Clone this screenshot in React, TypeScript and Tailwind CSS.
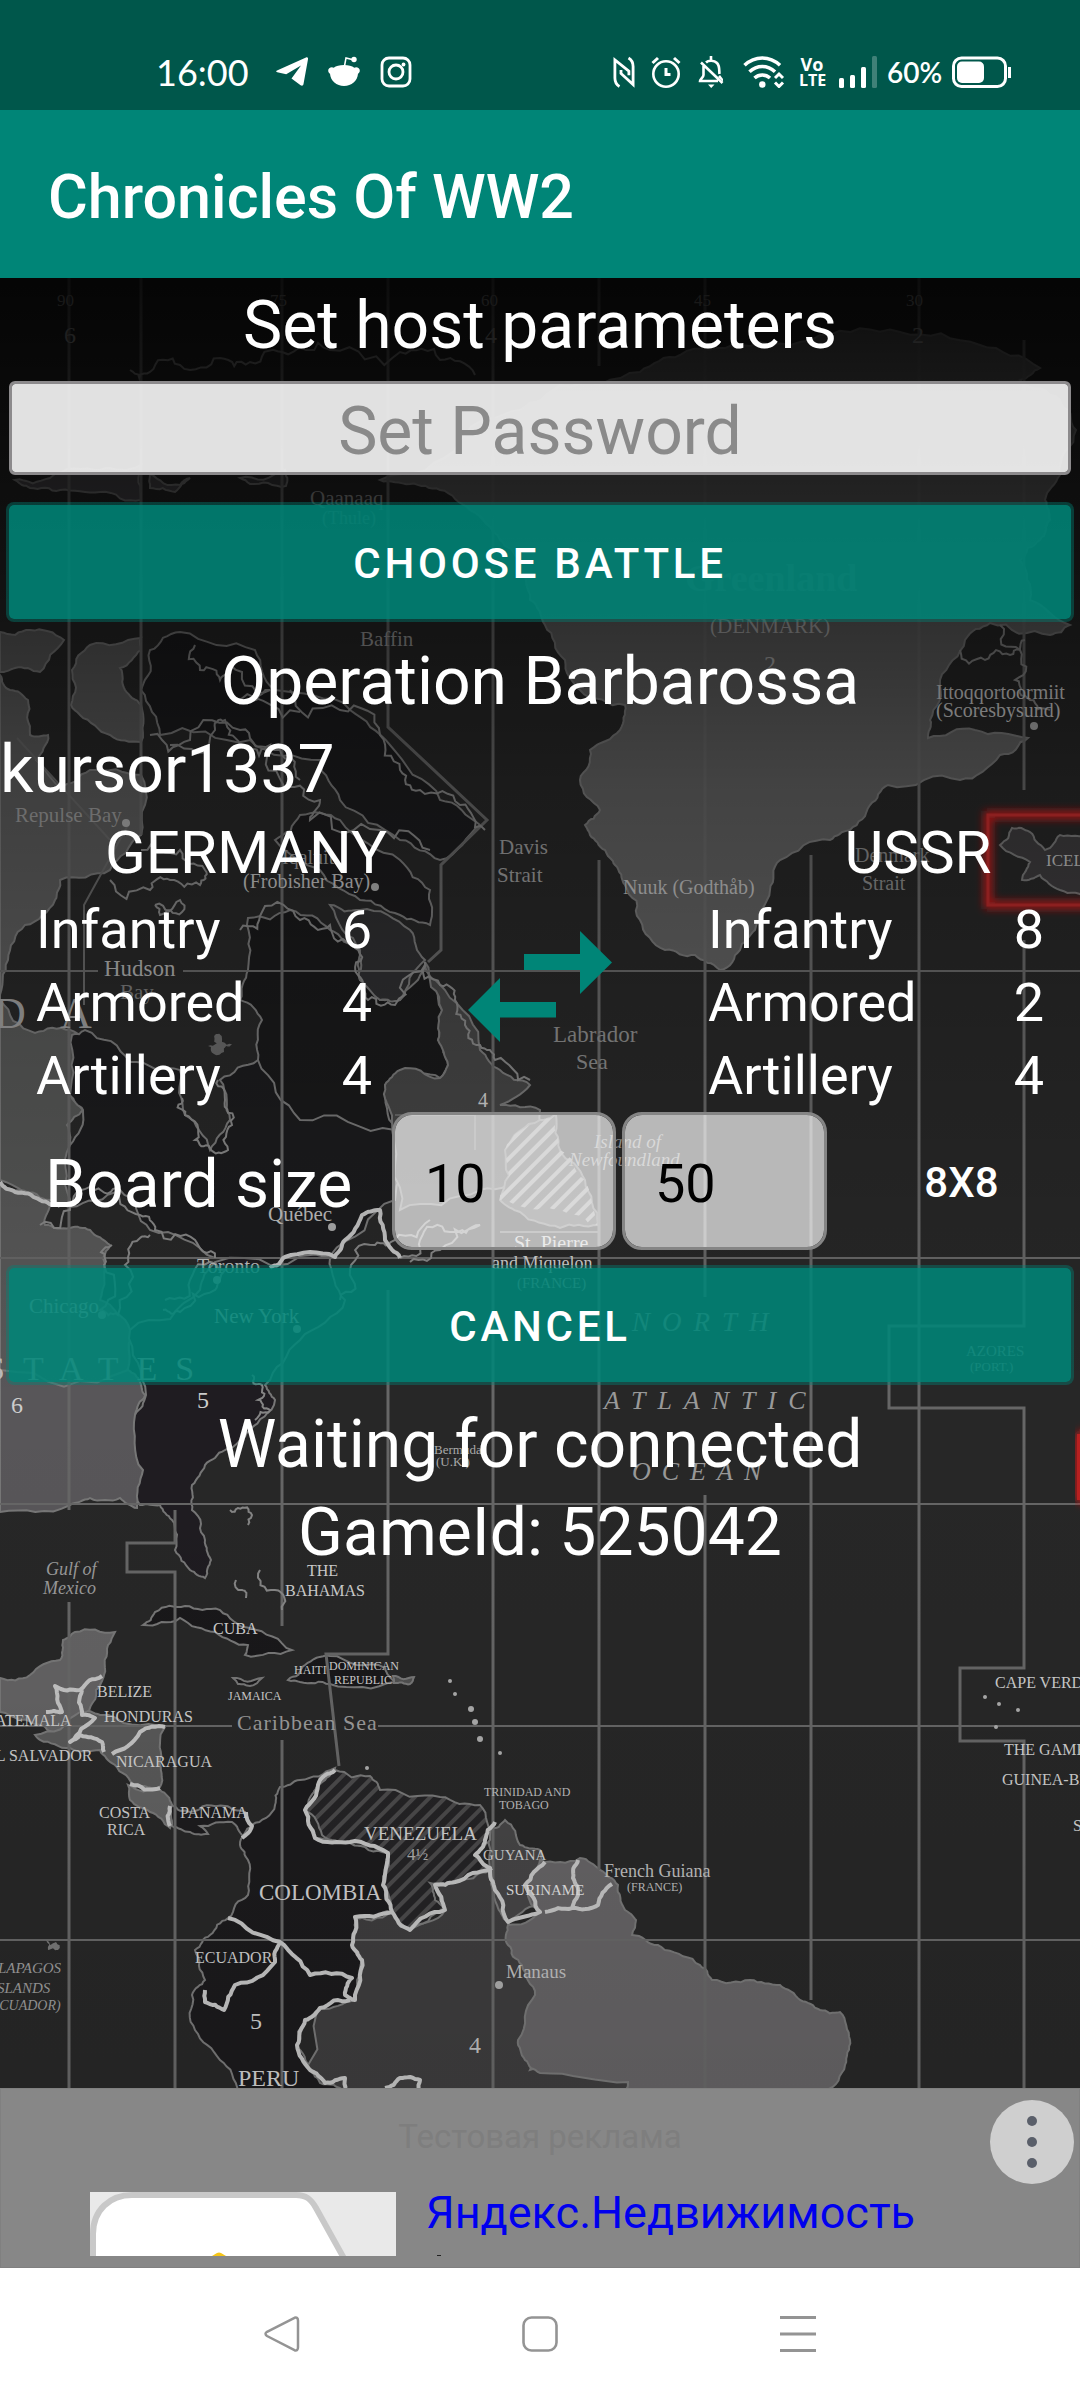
import React from "react";

type Pt = [number, number];

/* Turns a coarse outline into a ragged coast by displacing segment midpoints. */
function coast(points: string, closed = true, amp = 0.13): string {
  let pts: Pt[] = points.split(" ").map((p) => p.split(",").map(Number) as Pt);
  let seed = 7;
  const rnd = () => {
    seed = (seed * 16807) % 2147483647;
    return seed / 2147483647 - 0.5;
  };
  if (closed) pts.push(pts[0]);
  for (let k = 0; k < 3; k++) {
    const next: Pt[] = [pts[0]];
    for (let i = 1; i < pts.length; i++) {
      const [x1, y1] = pts[i - 1];
      const [x2, y2] = pts[i];
      const off = rnd() * amp * 2;
      const len = Math.hypot(x2 - x1, y2 - y1);
      const edge = (x1 <= 0 && x2 <= 0) || (y1 >= 2088 && y2 >= 2088) || len < 4;
      const d = edge ? 0 : off;
      next.push([(x1 + x2) / 2 + (y2 - y1) * d, (y1 + y2) / 2 - (x2 - x1) * d]);
      next.push([x2, y2]);
    }
    pts = next;
  }
  return "M" + pts.map(([x, y]) => `${x.toFixed(1)} ${y.toFixed(1)}`).join("L") + (closed ? "Z" : "");
}

const lands: { d: string; fill: string }[] = [
  // Arctic islands and northern Canada
  { d: "15,480 50,478 100,470 141,465 141,500 100,492 60,490 30,488", fill: "#4a484c" },
  { d: "150,474 180,485 190,478 175,492 150,488", fill: "#4a484c" },
  { d: "240,478 285,470 286,486 250,484", fill: "#3a3a3c" },
  { d: "0,632 30,630 64,640 40,672 15,668 0,672", fill: "#5a5a5a" },
  { d: "71,705 72,670 90,645 141,638 141,650 120,668 125,690 141,705 141,742 110,735 80,715", fill: "#5a5a5a" },
  { d: "0,675 10,690 28,700 30,735 48,735 36,760 60,790 90,770 141,775 141,835 110,870 60,880 55,900 25,925 8,960 0,1000", fill: "#5b5b5b" },
  { d: "0,1000 35,1033 70,1030 85,1035 72,1047 70,1095 83,1110 67,1125 70,1145 70,1207 50,1200 0,1180", fill: "#545554" },
  { d: "0,1184 20,1190 50,1205 45,1225 70,1228 90,1230 110,1245 103,1258 100,1300 130,1330 128,1383 0,1383", fill: "#585858" },
  { d: "72,1035 85,1030 130,1062 180,1070 185,1115 210,1150 230,1120 220,1080 258,1060 300,1100 390,1090 395,1200 330,1256 215,1258 150,1230 120,1190 70,1207 70,1145 83,1110 70,1095", fill: "#1b1b1d" },
  { d: "248,918 290,910 330,930 360,950 360,980 380,1000 400,1000 425,965 442,1010 438,1040 448,1065 440,1078 400,1070 385,1085 395,1130 300,1120 258,1060 262,1020 240,1000 248,970", fill: "#19191a" },
  { d: "425,962 445,990 480,1050 500,1070 530,1085 500,1105 540,1110 535,1170 480,1190 400,1210 392,1120 385,1085 400,1070 440,1078 448,1065 438,1040 442,1010", fill: "#444444" },
  { d: "275,840 300,815 340,820 400,860 430,890 430,925 400,915 360,900 320,870", fill: "#1b1a1c" },
  { d: "330,905 360,910 410,930 425,960 400,1000 380,1000 360,980 360,950", fill: "#2e2e30" },
  { d: "141,690 150,650 180,632 255,650 275,690 350,710 390,745 440,800 480,825 440,860 400,840 340,800 320,760 250,740 160,735", fill: "#1b1b1d" },
  // Greenland
  { d: "380,480 460,440 520,410 560,385 640,372 680,355 740,345 820,335 900,332 980,345 1040,368 1020,380 1060,400 1076,430 1060,475 1045,500 1050,520 1040,540 1020,560 1030,600 1070,625 1050,635 990,623 965,640 940,680 930,720 928,738 975,730 1028,738 1000,755 960,780 888,785 870,805 850,830 830,840 780,860 770,890 755,930 740,950 720,970 695,955 665,950 640,920 625,885 615,865 605,850 590,835 585,825 600,810 580,780 590,750 620,730 625,705 580,690 565,660 545,625 530,600 520,560 500,540 470,510 440,490 410,484", fill: "#606060" },
  // Iceland
  { d: "1000,845 1012,828 1030,832 1045,850 1060,835 1090,840 1090,898 1060,890 1040,875 1022,880 1030,862", fill: "#3d3b3d" },
  // Newfoundland
  { d: "500,1200 505,1150 540,1120 556,1115 560,1150 585,1180 598,1225 560,1228 520,1212", fill: "#4a4a4a" },
  // United States
  { d: "0,1370 128,1370 140,1382 145,1395 135,1415 140,1440 143,1470 137,1508 120,1498 90,1498 70,1505 0,1512", fill: "#585659" },
  { d: "130,1330 200,1290 215,1262 330,1258 345,1300 300,1340 265,1385 275,1400 250,1430 225,1450 205,1465 192,1485 192,1510 205,1540 211,1560 205,1578 190,1570 175,1550 172,1520 160,1505 140,1505 143,1470 135,1415 146,1395", fill: "#1f1c21" },
  // Central America
  { d: "0,1678 30,1675 60,1660 63,1640 75,1632 115,1632 108,1645 104,1675 96,1690 88,1712 60,1735 40,1725 0,1712", fill: "#636263" },
  { d: "35,1735 80,1712 100,1715 165,1727 160,1760 160,1787 135,1787 115,1765 100,1750 70,1748 40,1740", fill: "#585858" },
  { d: "128,1785 160,1790 172,1805 170,1828 150,1812 130,1800", fill: "#606060" },
  { d: "172,1805 190,1812 225,1806 245,1812 252,1828 244,1836 232,1822 200,1826 208,1834 190,1832 172,1826", fill: "#1c1b1d" },
  // Caribbean
  { d: "143,1625 155,1612 185,1606 220,1610 250,1628 292,1650 245,1655 248,1645 215,1632 180,1618", fill: "#19181a" },
  { d: "233,1678 262,1678 250,1686 238,1684", fill: "#19181a" },
  { d: "288,1680 305,1665 330,1656 385,1668 395,1682 330,1684 300,1682", fill: "#19181a" },
  { d: "393,1676 414,1677 410,1684 394,1683", fill: "#505050" },
  // South America
  { d: "350,1918 392,1912 410,1930 445,1910 435,1885 490,1870 508,1922 545,1990 530,2070 628,2082 628,2092 300,2092", fill: "#3d3c3d" },
  { d: "252,1825 275,1805 280,1787 300,1780 335,1768 318,1785 305,1810 315,1838 350,1842 388,1853 383,1880 392,1912 355,1918 352,1945 362,1960 355,2000 320,2008 305,2020 297,2045 310,2070 320,2083 345,2092 238,2092 220,2060 195,2030 192,1995 205,1980 195,1950 210,1935 228,1918 248,1895 248,1860 240,1845", fill: "#1b1a1c" },
  { d: "490,1830 505,1820 520,1845 540,1850 545,1865 525,1885 538,1905 508,1922 497,1905 492,1870", fill: "#454445" },
  { d: "508,1925 540,1912 525,1885 540,1860 580,1858 600,1870 618,1885 625,1910 636,1920 632,1935 658,1945 665,1950 700,1965 712,1980 750,1980 780,1985 800,2000 820,2010 840,2012 850,2040 845,2065 826,2092 625,2092 628,2082 540,2073 525,2060 518,2040 535,1995 522,1965 508,1945", fill: "#646264" },
];

const venezuela =
  "335,1770 370,1776 380,1790 440,1797 480,1805 490,1840 475,1855 490,1870 455,1882 430,1883 435,1900 445,1910 410,1930 392,1912 383,1885 388,1853 350,1843 322,1835 305,1810 318,1785";

const shores = [
  "150,735 190,740 240,730 270,745 285,790 320,800 310,820 380,830 430,850",
  "130,370 150,372 180,365 220,358 250,362 282,352 330,350 400,352 440,360 475,375",
  "195,645 200,670 220,680 230,665 270,690 240,700 300,712",
  "290,690 340,710 380,735 400,770 420,790 460,805 485,830",
  "170,745 215,730 225,720 240,745 280,750 300,780",
  "240,930 262,912 300,920 330,925 355,948 358,975 368,1000 395,1005 425,965",
  "425,962 440,985 455,1000 465,1025 480,1045 495,1060 530,1080",
  "110,880 150,890 170,880 200,885 205,870 180,850 141,850",
  "155,905 180,900 182,912 160,915 155,905",
  "182,1098 185,1115 195,1140 210,1148 228,1150 232,1125 225,1100 218,1080",
  "40,1225 70,1210 95,1190 120,1190 140,1215 155,1230 195,1240 215,1258",
  "112,1245 104,1265 100,1310 118,1315 125,1265 140,1238 150,1235",
  "165,1300 190,1280 225,1270 215,1290 180,1312 163,1310",
  "340,1300 350,1270 375,1245 395,1240 430,1220",
  "400,1258 420,1240 450,1232 480,1225 440,1250 410,1262",
  "252,1375 262,1385 258,1400 270,1410 255,1420",
  "230,1510 238,1508 252,1515 248,1525",
  "236,1580 242,1590 246,1598",
  "260,1570 275,1590 282,1610",
  "1000,625 1020,650 1015,680 1030,700 1050,710",
  "960,650 985,660 1010,655 1025,640",
];

const borders = [
  "0,1182 15,1192 40,1200 60,1206",
  "270,1268 285,1257 335,1257 345,1240 362,1215 380,1210 385,1240 400,1258",
  "102,1676 80,1690 55,1686 62,1712 46,1712",
  "82,1690 82,1715 95,1718 70,1742 80,1735 102,1742 104,1752",
  "165,1727 140,1732 112,1754",
  "130,1784 160,1788",
  "170,1806 170,1826",
  "246,1812 252,1826 242,1838",
  "335,1770 318,1785 305,1810 315,1838 350,1842 388,1853 383,1885 392,1912 355,1917 352,1945 362,1960 355,2000 345,1995 352,1978 310,1975 280,1942 228,1918",
  "280,1942 275,1962 235,1985 224,2010 205,2002 205,1990",
  "350,2000 320,2008 305,2020 297,2045 310,2070 325,2083 345,2078 345,2090",
  "385,2088 400,2078 420,2080 418,2090",
  "495,1822 485,1840 475,1855 490,1868 495,1890 508,1922 540,1912 525,1885 545,1862",
  "578,1860 573,1878 578,1895 572,1908 545,1912",
  "612,1884 598,1905 572,1908",
  "392,1912 410,1930 445,1910 435,1885 455,1882 492,1868",
];

const labels: [string, number, number, number, string][] = [
  ["90", 57, 306, 17, "#aaa"], ["75", 270, 306, 17, "#aaa"], ["60", 481, 306, 17, "#aaa"],
  ["45", 694, 306, 17, "#aaa"], ["30", 906, 306, 17, "#aaa"], ["6", 64, 343, 24, "#aaa"],
  ["4", 485, 343, 24, "#aaa"], ["2", 912, 343, 24, "#aaa"],
  ["Qaanaaq", 310, 505, 21, "#999"], ["(Thule)", 322, 524, 18, "#999"],
  ["(DENMARK)", 710, 633, 21, "#aaa"], ["Baffin", 360, 646, 21, "#999"],
  ["Ittoqqortoormiit", 936, 699, 20, "#ccc"], ["(Scoresbysund)", 936, 717, 20, "#ccc"],
  ["2", 764, 672, 24, "#aaa"], ["Repulse Bay", 15, 822, 21, "#999"],
  ["Iqaluit", 282, 864, 20, "#999"], ["(Frobisher Bay)", 243, 888, 20, "#bbb"],
  ["Davis", 499, 854, 21, "#999"], ["Strait", 497, 882, 21, "#999"],
  ["Nuuk (Godthåb)", 623, 894, 20, "#bbb"], ["Denmark", 855, 862, 20, "#888"],
  ["Strait", 862, 890, 20, "#888"], ["Hudson", 104, 976, 23, "#aaa"], ["Bay", 120, 999, 21, "#777"],
  ["Labrador", 553, 1042, 23, "#888"], ["Sea", 576, 1069, 22, "#888"],
  ["4", 478, 1107, 20, "#ccc"], ["Québec", 268, 1221, 21, "#bbb"],
  ["Toronto", 197, 1273, 20, "#bbb"], ["Chicago", 29, 1313, 21, "#ccc"],
  ["New York", 214, 1323, 21, "#ccc"], ["St. Pierre", 514, 1250, 20, "#ccc"],
  ["and Miquelon", 492, 1269, 18, "#ccc"], ["(FRANCE)", 517, 1288, 15, "#aaa"],
  ["AZORES", 966, 1356, 15, "#999"], ["(PORT.)", 970, 1371, 13, "#999"],
  ["6", 11, 1413, 24, "#ccc"], ["5", 197, 1408, 24, "#ccc"],
  ["Bermuda", 434, 1454, 13, "#aaa"], ["(U.K.)", 436, 1466, 13, "#aaa"],
  ["THE", 307, 1576, 16, "#ccc"], ["BAHAMAS", 285, 1596, 16, "#ccc"],
  ["CUBA", 213, 1634, 16, "#ccc"], ["HAITI", 294, 1674, 12, "#ccc"],
  ["DOMINICAN", 329, 1670, 12, "#ccc"], ["REPUBLIC", 334, 1684, 12, "#ccc"],
  ["JAMAICA", 228, 1700, 12, "#ccc"], ["BELIZE", 97, 1697, 16, "#ccc"],
  ["HONDURAS", 104, 1722, 16, "#ccc"], ["GUATEMALA", -28, 1726, 16, "#ccc"],
  ["EL SALVADOR", -14, 1761, 16, "#ccc"], ["NICARAGUA", 116, 1767, 16, "#ccc"],
  ["COSTA", 99, 1818, 16, "#ccc"], ["RICA", 107, 1835, 16, "#ccc"],
  ["PANAMA", 180, 1818, 16, "#ccc"], ["TRINIDAD AND", 484, 1796, 12, "#bbb"],
  ["TOBAGO", 499, 1809, 12, "#bbb"], ["VENEZUELA", 364, 1840, 19, "#ccc"],
  ["4½", 407, 1860, 17, "#aaa"], ["GUYANA", 483, 1860, 15, "#ccc"],
  ["SURINAME", 506, 1895, 15, "#ddd"], ["COLOMBIA", 259, 1900, 23, "#ccc"],
  ["French Guiana", 604, 1877, 18, "#bbb"], ["(FRANCE)", 627, 1891, 12, "#bbb"],
  ["ECUADOR", 195, 1963, 16, "#ccc"], ["Manaus", 506, 1978, 19, "#bbb"],
  ["5", 250, 2029, 24, "#ccc"], ["4", 469, 2053, 24, "#bbb"], ["PERU", 238, 2086, 24, "#ccc"],
  ["CAPE VERDE", 995, 1688, 16, "#ccc"], ["THE GAMBIA", 1004, 1755, 16, "#ccc"],
  ["GUINEA-BISSAU", 1002, 1785, 16, "#ccc"], ["S", 1073, 1831, 16, "#ccc"],
  ["ICELAND", 1046, 866, 17, "#bbb"],
];

const italics: [string, number, number, number][] = [
  ["Gulf of", 46, 1575, 18], ["Mexico", 43, 1594, 18], ["Island of", 594, 1148, 19],
  ["Newfoundland", 569, 1166, 19], ["GALAPAGOS", -22, 1973, 15], ["ISLANDS", -8, 1993, 15],
  ["(ECUADOR)", -14, 2010, 14],
];

function MapBackdrop() {
  return (
    <svg
      className="absolute inset-0 h-full w-full font-['Liberation_Serif',serif]"
      viewBox="0 278 1080 1810"
      preserveAspectRatio="xMidYMin slice"
      aria-hidden="true"
    >
      <defs>
        <linearGradient id="shade" x1="0" y1="0" x2="0" y2="1">
          <stop offset="0" stopColor="#000" stopOpacity="0.88" />
          <stop offset="0.1" stopColor="#000" stopOpacity="0.68" />
          <stop offset="0.19" stopColor="#000" stopOpacity="0.5" />
          <stop offset="0.28" stopColor="#000" stopOpacity="0.31" />
          <stop offset="0.42" stopColor="#000" stopOpacity="0.16" />
          <stop offset="0.62" stopColor="#000" stopOpacity="0" />
          <stop offset="1" stopColor="#000" stopOpacity="0.08" />
        </linearGradient>
        <pattern id="hatch" width="11" height="11" patternUnits="userSpaceOnUse" patternTransform="rotate(45)">
          <rect width="11" height="11" fill="#242325" />
          <rect width="4" height="11" fill="#4a494a" />
        </pattern>
        <pattern id="hatchLight" width="11" height="11" patternUnits="userSpaceOnUse" patternTransform="rotate(45)">
          <rect width="4" height="11" fill="#9a9a9a" />
        </pattern>
        <filter id="glow" x="-20%" y="-20%" width="140%" height="140%">
          <feGaussianBlur stdDeviation="4" />
        </filter>
      </defs>
      <rect y="278" width="1080" height="1810" fill="#272727" />
      {lands.map((l, i) => (
        <path key={i} d={coast(l.d)} fill={l.fill} stroke="#777" strokeWidth="2" />
      ))}
      <path d={coast(venezuela)} fill="url(#hatch)" stroke="#777" strokeWidth="2" />
      <path d={coast("500,1200 505,1150 540,1120 556,1115 560,1150 585,1180 598,1225 560,1210")} fill="url(#hatchLight)" />
      <g stroke="#666" strokeWidth="3" fill="none">
        <path d="M69 278V1510M69 1602V2088M141 278V835M175 1510V1543H127V1572H175V2088M282 278V1626M282 1740V2088M388 278V727L487 820L441 865V950L428 962M388 1290V1654H326L339 1766M493 278V2088M599 278V366M599 860V1870M705 278V1297M705 1495V2088M811 855V2000M919 278V2088M1024 340V790M1024 940V1326H889V1408H1024V1668H960V1741H1024V2088" />
        <path d="M0 971H98M183 971H1080M0 1258H1080M0 1504H1080M0 1726H232M378 1726H1080M0 1940H1080M395 1115H475V1150M500 1232H598" strokeWidth="2" />
        <path d="M128 825L84 905V1005M17 738L110 840" strokeWidth="2" />
      </g>
      <g fill="none" stroke="#858585" strokeWidth="2">
        {shores.map((s, i) => (
          <path key={i} d={coast(s, false, 0.35)} />
        ))}
      </g>
      <g fill="none" stroke="#c2c2c2" strokeWidth="4" strokeLinejoin="round">
        {borders.map((b, i) => (
          <path key={i} d={coast(b, false, 0.12)} />
        ))}
      </g>
      <g fill="#aaa">
        <circle cx="126" cy="823" r="4" />
        <circle cx="375" cy="887" r="4" />
        <circle cx="332" cy="1227" r="4" />
        <circle cx="217" cy="1280" r="4" />
        <circle cx="102" cy="1315" r="4" />
        <circle cx="297" cy="1329" r="4" />
        <circle cx="1034" cy="726" r="4" />
        <circle cx="499" cy="1985" r="4" />
        <circle cx="471" cy="1709" r="3" />
        <circle cx="475" cy="1722" r="3" />
        <circle cx="480" cy="1739" r="3" />
        <circle cx="455" cy="1694" r="2" />
        <circle cx="450" cy="1681" r="2" />
        <circle cx="500" cy="1753" r="2" />
        <circle cx="367" cy="1768" r="2" />
        <circle cx="985" cy="1697" r="2" />
        <circle cx="999" cy="1704" r="2" />
        <circle cx="1018" cy="1710" r="2" />
        <circle cx="996" cy="1727" r="2" />
        <path d={coast("208,1046 216,1034 222,1042 232,1044 224,1052 214,1054", true, 0.4)} fill="#666" />
        <path d={coast("46,1940 56,1942 58,1950 48,1950", true, 0.4)} fill="#777" />
      </g>
      {labels.map(([t, x, y, s, c], i) => (
        <text key={i} x={x} y={y} fontSize={s} fill={c}>{t}</text>
      ))}
      <g fontStyle="italic" fill="#999">
        {italics.map(([t, x, y, s]) => (
          <text key={t} x={x} y={y} fontSize={s}>{t}</text>
        ))}
      </g>
      <g fill="#999">
        <text x="-6" y="1028" fontSize="44">D</text>
        <text x="60" y="1028" fontSize="44">A</text>
        <text x="685" y="591" fontSize="38" fontWeight="bold" fill="#999">Greenland</text>
        <text x="-14" y="1380" fontSize="34" fill="#bbb" className="tracking-[18px]">STATES</text>
        <text x="237" y="1730" fontSize="22" className="tracking-[1px]">Caribbean Sea</text>
        <g fontStyle="italic">
          <text x="632" y="1331" fontSize="27" className="tracking-[12px]">NORTH</text>
          <text x="604" y="1409" fontSize="26" className="tracking-[12px]">ATLANTIC</text>
          <text x="632" y="1480" fontSize="26" className="tracking-[11px]">OCEAN</text>
        </g>
      </g>
      <rect y="278" width="1080" height="1810" fill="url(#shade)" />
      <rect x="988" y="815" width="120" height="90" fill="none" stroke="#a01212" strokeWidth="8" filter="url(#glow)" />
      <rect x="988" y="815" width="120" height="90" fill="none" stroke="#8c2020" strokeWidth="3" />
      <rect x="1079" y="1434" width="20" height="66" rx="6" fill="none" stroke="#d01818" strokeWidth="8" filter="url(#glow)" />
      <path d="M1079 1434v66" stroke="#b82020" strokeWidth="4" />
    </svg>
  );
}

function StatusBar() {
  return (
    <header className="flex h-[110px] items-center justify-between bg-[#00574b] pt-[34px] pr-[68px] pl-[156px] font-[Lato,sans-serif] text-white">
      <div className="flex items-center">
        <span className="w-[120px] text-[36px] leading-[38px]">16:00</span>
        <svg className="h-8 w-8" viewBox="0 0 32 32" fill="currentColor" aria-label="Telegram">
          <path d="M1 14.4 30 1.5c1.4-.6 2.3.2 2 1.700L27.500 28c-.3 1.700-1.500 2.100-2.900 1.200L15.500 22.600 25 9.500 10.200 18.200 1.300 16.200C-.3 15.700-.2 15 1 14.400Z" />
        </svg>
        <svg className="ml-5 h-8 w-8" viewBox="0 0 32 32" fill="currentColor" aria-label="Reddit">
          <path d="M16 9c4.500 0 8 1 10.300 2.800 2-1.500 5.700 0 5.500 3-.1 1.500-.8 2.400-1.800 3C29.500 25 23.500 30 16 30S2.500 25 2 17.800C1 17.200.3 16.300.2 14.800c-.2-3 3.500-4.500 5.500-3C8 10 11.500 9 16 9Z" />
          <path d="M16.500 10 18 2l8 2" fill="none" stroke="currentColor" strokeWidth="1.500" />
          <circle cx="26" cy="3.500" r="2.700" />
        </svg>
        <svg className="ml-5 h-8 w-8" viewBox="0 0 32 32" fill="none" stroke="currentColor" strokeWidth="2.800" aria-label="Instagram">
          <rect x="2" y="2" width="28" height="28" rx="7" />
          <circle cx="16" cy="16" r="7" />
          <circle cx="23.500" cy="8.500" r="1.900" fill="currentColor" stroke="none" />
        </svg>
      </div>
      <div className="flex items-center">
        <svg className="h-8 w-[22px]" viewBox="0 0 22 32" fill="none" stroke="currentColor" strokeWidth="2.800" aria-label="NFC">
          <path d="M6.500 30.500C3 28.500 1.900 26 1.900 22V4l14 11.200v4" />
          <path d="M15.500 2C19 4 20.100 6.500 20.100 10.500V28.500L8 17.500v-3.500" />
        </svg>
        <svg className="ml-4 h-8 w-[30px]" viewBox="0 0 30 32" fill="none" stroke="currentColor" strokeWidth="2.600" aria-label="Alarm">
          <circle cx="15" cy="18" r="12.700" />
          <path d="M15 12v6.500h4.500M1.500 7 7 2M28.500 7 23 2" strokeWidth="3" />
        </svg>
        <svg className="ml-4 h-8 w-[28px]" viewBox="0 0 28 32" fill="none" stroke="currentColor" strokeWidth="2.600" aria-label="Silent">
          <path d="M6.500 10v9c0 2.500-3.500 4-3.500 6h18M9 6.500C11 4.500 17 3.800 20 7c3 3 2 8 2.500 11M14 0v4M4 6.500 25.500 27" />
          <path d="M11 28.500h6.500L14.200 32ZM23 19l3 4v2.500L21 21Z" fill="currentColor" stroke="none" />
        </svg>
        <svg className="ml-[18px] h-8 w-[42px]" viewBox="0 0 42 32" fill="none" stroke="currentColor" strokeWidth="3.600" aria-label="Wi-Fi">
          <path d="M1.500 9.200C12-.5 26.500-.5 37 9.200M6.500 15.700c7.500-7 18-7 25.500 0M11.500 22c4.500-4 11-4 15.500 0" />
          <circle cx="19.300" cy="28.500" r="3.200" fill="currentColor" stroke="none" />
          <path d="m32 22 4-4 4 4M32 26.500l4 4 4-4" strokeWidth="3" />
        </svg>
        <span className="ml-[14px] flex w-[26px] flex-col text-center font-['Open_Sans',sans-serif] text-[16px] leading-4 font-bold">
          <span className="text-[18px]">Vo</span>
          <span>LTE</span>
        </span>
        <svg className="ml-[14px] h-8 w-[38px]" viewBox="0 0 38 32" fill="currentColor" aria-label="Signal">
          <rect x="0" y="22" width="5" height="10" rx="1.500" />
          <rect x="11" y="19" width="5" height="13" rx="1.500" />
          <rect x="22" y="11" width="5" height="21" rx="1.500" />
          <rect x="33" y="0" width="5" height="32" rx="1.500" opacity="0.25" />
        </svg>
        <span className="ml-[10px] w-[56px] text-[28px] leading-8 font-semibold">60%</span>
        <svg className="ml-[9px] h-8 w-[60px]" viewBox="0 0 60 32" fill="none" stroke="currentColor" strokeWidth="3" aria-label="Battery">
          <rect x="1.500" y="2" width="52" height="28.500" rx="8" />
          <rect x="5" y="5.500" width="27" height="21.500" rx="5" fill="currentColor" stroke="none" />
          <path d="M57.500 11v11" />
        </svg>
      </div>
    </header>
  );
}

function Army({ name, units }: { name: string; units: [string, number][] }) {
  return (
    <table className="w-[336px] text-[54px] leading-[73px]">
      <caption className="text-[60px] leading-[80px]">
        <span className="ml-[84px] flex w-[252px] justify-center whitespace-nowrap">{name}</span>
      </caption>
      <tbody>
        {units.map(([unit, count]) => (
          <tr key={unit}>
            <th scope="row" className="p-0 text-left font-normal">{unit}</th>
            <td className="p-0 text-right">{count}</td>
          </tr>
        ))}
      </tbody>
    </table>
  );
}

function WideButton({ children }: { children: React.ReactNode }) {
  return (
    <button
      type="button"
      className="mx-1.5 block h-[120px] rounded-lg border-[3px] border-[#008577]/40 bg-[#008577]/88 bg-clip-padding pt-1 text-[42px] leading-[48px] font-medium tracking-[0.09em] uppercase"
    >
      {children}
    </button>
  );
}

export default function App() {
  return (
    <div className="flex min-h-screen flex-col bg-white font-[Roboto,sans-serif] text-white">
      <StatusBar />
      <div className="flex h-[168px] items-center bg-[#008577] px-12 pt-1.5">
        <h1 className="text-[61px] leading-[70px] font-medium">Chronicles Of WW2</h1>
      </div>

      <main className="relative flex grow flex-col overflow-hidden pt-1 text-[66px] leading-[88px]">
        <MapBackdrop />
        <div className="relative flex flex-col">
          <h2 className="text-center">Set host parameters</h2>
          <input
            type="text"
            aria-label="Set Password"
            placeholder="Set Password"
            className="mx-[9px] mt-[11px] mb-[27px] h-[94px] rounded-md border-[3px] border-[#8c8a8c] bg-white/88 bg-clip-padding pt-1.5 text-center text-black placeholder:text-[#8a8a8a]"
          />
          <WideButton>Choose battle</WideButton>
          <p className="mt-4 text-center">Operation Barbarossa</p>
          <p>kursor1337</p>

          <section className="-mt-px flex items-center justify-between px-9">
            <Army name="GERMANY" units={[["Infantry", 6], ["Armored", 4], ["Artillery", 4]]} />
            <button type="button" aria-label="Swap sides" className="pt-12">
              <svg className="h-[111px] w-[144px]" viewBox="0 0 144 111" fill="#008577">
                <path d="M56 23h56V0l32 31.500L112 63V39H56ZM88 71H32V47L0 79l32 32V86.500h56Z" />
              </svg>
            </button>
            <Army name="USSR" units={[["Infantry", 8], ["Armored", 2], ["Artillery", 4]]} />
          </section>

          <div className="mb-[15px] flex h-[138px] items-stretch">
            <label htmlFor="board-width" className="flex w-[392px] items-center pt-2 pl-[45px]">
              Board size
            </label>
            <input
              id="board-width"
              type="text"
              defaultValue="10"
              className="w-[224px] rounded-[20px] border-[3px] border-[#858585] bg-white/68 bg-clip-padding px-[30px] pt-1 text-[54px] leading-[73px] text-black"
            />
            <input
              type="text"
              aria-label="Board height"
              defaultValue="50"
              className="ml-1.5 w-[205px] rounded-[20px] border-[3px] border-[#858585] bg-white/68 bg-clip-padding px-[30px] pt-1 text-[54px] leading-[73px] text-black"
            />
            <button type="button" className="flex-1 pt-1 pl-4 text-[42px] leading-[48px] font-medium">
              8X8
            </button>
          </div>

          <WideButton>Cancel</WideButton>
          <div className="mt-4 text-center">
            <p>Waiting for connected</p>
            <p>GameId: 525042</p>
          </div>
        </div>
      </main>

      <aside className="relative h-[180px] border border-[#808080] bg-[#878787] pt-6">
        <p className="text-center text-[33px] leading-[48px] text-[#7e7e7e]">Тестовая реклама</p>
        <div className="mt-[31px] flex h-16 overflow-hidden pl-[89px]">
          <svg className="h-16 w-[306px] shrink-0" viewBox="0 0 306 64" aria-hidden="true">
            <rect width="306" height="64" fill="#e9e9e9" />
            <path d="M3 70V42C3 18 20 3 42 3H206c10 0 15 4 20 13l30 54Z" fill="#fff" stroke="#c8c8c8" strokeWidth="6" />
            <path d="M122 64l5-3q2-1 4 0l5 3Z" fill="#f5c518" />
          </svg>
          <div className="ml-[30px] flex flex-col justify-between">
            <a href="#ad" className="text-[45px] leading-[42px] text-[#0000ee]">Яндекс.Недвижимость</a>
            <span className="ml-[11px] h-px w-1 bg-[#222]" />
          </div>
        </div>
        <button
          type="button"
          aria-label="Ad options"
          className="absolute top-[11px] right-[5px] flex h-[84px] w-[84px] flex-col items-center justify-center gap-[11px] rounded-full bg-[#cfcfcf]"
        >
          <span className="h-2.5 w-2.5 rounded-full bg-[#5a5f6a]" />
          <span className="h-2.5 w-2.5 rounded-full bg-[#5a5f6a]" />
          <span className="h-2.5 w-2.5 rounded-full bg-[#5a5f6a]" />
        </button>
      </aside>

      <nav className="flex h-[132px] items-center justify-center gap-[222px] text-[#949494]">
        <button type="button" aria-label="Back">
          <svg className="h-9 w-9" viewBox="0 0 36 36" fill="none" stroke="currentColor" strokeWidth="2.500" strokeLinejoin="round">
            <path d="M30.500 1.800 3 15.800q-3 2 0 4.200L30.500 34.200q3.500 1 3.500-3V4.800q0-4-3.500-3Z" />
          </svg>
        </button>
        <button type="button" aria-label="Home">
          <svg className="h-9 w-9" viewBox="0 0 36 36" fill="none" stroke="currentColor" strokeWidth="2.600">
            <rect x="1.500" y="1.500" width="33" height="33" rx="8" />
          </svg>
        </button>
        <button type="button" aria-label="Recent apps">
          <svg className="h-9 w-9" viewBox="0 0 36 36" stroke="currentColor" strokeWidth="3">
            <path d="M0 1.500h36M0 18h36M0 34.500h36" />
          </svg>
        </button>
      </nav>
    </div>
  );
}
